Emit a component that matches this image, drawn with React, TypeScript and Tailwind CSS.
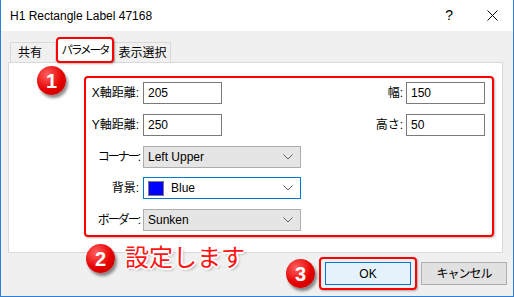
import { ReactNode } from 'react'

const FONT = "font-['Liberation_Sans','Noto_Sans_CJK_JP',sans-serif]"

function Chevron() {
  return (
    <svg width="10" height="6" viewBox="0 0 10 6" className="shrink-0">
      <polyline points="0.5,0.5 5,5 9.5,0.5" fill="none" stroke="#606060" strokeWidth="1" />
    </svg>
  )
}

function Badge({ n, className }: { n: string; className: string }) {
  return (
    <div
      className={`absolute w-[29px] h-[29px] rounded-full flex items-center justify-center text-white font-bold text-[20px] leading-none bg-[radial-gradient(circle_at_35%_30%,#ff6060,#e60000_55%,#b80000)] shadow-[2px_3px_3px_rgba(0,0,0,0.45)] ${className}`}
    >
      {n}
    </div>
  )
}

function TextBox({ value }: { value: string }) {
  return (
    <div className="w-[79px] h-[22px] border border-[#7a7a7a] bg-white flex items-center pl-[4px] text-[12px]">
      {value}
    </div>
  )
}

function Select({ children, focused }: { children: ReactNode; focused?: boolean }) {
  return (
    <div
      className={`w-[158px] h-[22px] border flex items-center justify-between pl-[4px] pr-[7px] text-[12px] ${
        focused ? 'border-[#0078d7] bg-white' : 'border-[#adadad] bg-[#e5e5e5]'
      }`}
    >
      <div className="flex items-center">{children}</div>
      <Chevron />
    </div>
  )
}

function Label({ text, tight }: { text: string; tight?: boolean }) {
  return (
    <div className={`w-[54px] text-right pr-[1px] text-[12px] whitespace-nowrap ${tight ? 'tracking-[-2px]' : ''}`}>
      {text}
    </div>
  )
}

export default function App() {
  return (
    <div className={`relative w-[514px] h-[297px] flex flex-col border-x border-b border-[#2b7fd8] text-black ${FONT}`}>
      {/* title bar */}
      <div className="h-[31px] bg-white flex items-center pl-[9px] pr-[15px] text-[12px]">
        <span>H1 Rectangle Label 47168</span>
        <span className="ml-auto text-[14px] mr-[34px]">?</span>
        <svg width="11" height="11" viewBox="0 0 11 11">
          <line x1="0.5" y1="0.5" x2="10.5" y2="10.5" stroke="#000" strokeWidth="1" />
          <line x1="10.5" y1="0.5" x2="0.5" y2="10.5" stroke="#000" strokeWidth="1" />
        </svg>
      </div>

      <div className="flex-1 bg-[#f0f0f0] flex flex-col">
        {/* tabs */}
        <div className="mt-[6px] pl-[9px] h-[25px] flex items-end text-[12px] whitespace-nowrap">
          <div className="w-[46px] h-[20px] border border-b-0 border-[#d9d9d9] bg-[#f0f0f0] flex items-center pl-[7px]">
            共有
          </div>
          <div className="relative z-10 -mb-px w-[58px] h-[26px] border-2 border-[#ff0000] rounded-[4px] bg-white flex items-center justify-center pt-[2px] text-[11.5px] tracking-[-2px] shadow-[1px_1px_2px_rgba(0,0,0,0.3)]">
            パラメータ
          </div>
          <div className="w-[57px] h-[20px] border border-b-0 border-[#d9d9d9] bg-[#f0f0f0] flex items-center justify-center">
            表示選択
          </div>
        </div>

        {/* panel */}
        <div className="ml-[7px] w-[495px] h-[191px] border border-[#d9d9d9] bg-white">
          <div className="ml-[75px] mt-[13px] w-[410px] h-[161px] border-2 border-[#ff0000] rounded-[4px] shadow-[1px_1px_2px_rgba(0,0,0,0.3)] pt-[4px] flex flex-col">
            <div className="flex items-center">
              <Label text="X軸距離:" />
              <div className="ml-[3px]">
                <TextBox value="205" />
              </div>
              <div className="ml-auto mr-[3px] text-[12px]">幅:</div>
              <div className="mr-[7px]">
                <TextBox value="150" />
              </div>
            </div>
            <div className="flex items-center mt-[10px]">
              <Label text="Y軸距離:" />
              <div className="ml-[3px]">
                <TextBox value="250" />
              </div>
              <div className="ml-auto mr-[3px] text-[12px]">高さ:</div>
              <div className="mr-[7px]">
                <TextBox value="50" />
              </div>
            </div>
            <div className="flex items-center mt-[10px]">
              <Label text="コーナー:" tight />
              <div className="ml-[3px]">
                <Select>Left Upper</Select>
              </div>
            </div>
            <div className="flex items-center mt-[9px]">
              <Label text="背景:" />
              <div className="ml-[3px]">
                <Select focused>
                  <span className="w-[16px] h-[15px] bg-[#0000ff] border border-[#7a7a7a] mr-[7px]" />
                  Blue
                </Select>
              </div>
            </div>
            <div className="flex items-center mt-[10px]">
              <Label text="ボーダー:" tight />
              <div className="ml-[3px]">
                <Select>Sunken</Select>
              </div>
            </div>
          </div>
        </div>

        {/* buttons */}
        <div className="mt-[4px] flex items-center justify-end pr-[6px]">
          <div className="border-2 border-[#ff0000] rounded-[4px] px-[4px] py-[3px] shadow-[1px_1px_2px_rgba(0,0,0,0.3)]">
            <div className="w-[86px] h-[23px] border border-[#0078d7] bg-[#e5f1fb] flex items-center justify-center text-[12px]">
              OK
            </div>
          </div>
          <div className="ml-[4px] w-[86px] h-[23px] border border-[#adadad] bg-[#e1e1e1] flex items-center justify-center text-[12px] tracking-[-1px]">
            キャンセル
          </div>
        </div>
      </div>

      {/* annotations */}
      <Badge n="1" className="left-[36px] top-[66px]" />
      <Badge n="2" className="left-[85px] top-[244px]" />
      <Badge n="3" className="left-[285px] top-[259px]" />
      <div className="absolute left-[124px] top-[241px] text-[24px] leading-[30px] text-[#ff1414] font-['Noto_Sans_CJK_JP',sans-serif] [text-shadow:-1px_-1px_0_#fff,1px_-1px_0_#fff,-1px_1px_0_#fff,1px_1px_0_#fff,0_-2px_0_#fff,0_2px_0_#fff,-2px_0_0_#fff,2px_0_0_#fff,2px_2px_3px_rgba(0,0,0,0.35)]">
        設定します
      </div>
    </div>
  )
}
